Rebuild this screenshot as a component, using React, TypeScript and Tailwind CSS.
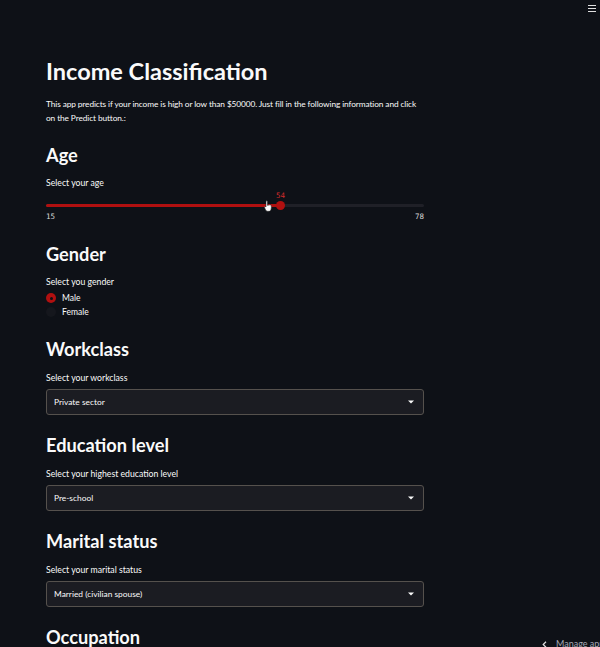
import React from 'react';

const font = { fontFamily: 'Lato, "Noto Sans", sans-serif' };
const mono = { fontFamily: '"DejaVu Sans Mono", monospace' };

const Heading = ({ children }: { children: React.ReactNode }) => (
  <h2 className="text-[18.2px] leading-[24px] font-bold text-[#fafafa]">{children}</h2>
);

const Label = ({ children }: { children: React.ReactNode }) => (
  <p className="text-[8.7px] leading-[12px] text-[#fafafa]">{children}</p>
);

const SelectBox = ({ value }: { value: string }) => (
  <div className="mt-[5px] h-[26px] w-full rounded-[3px] border border-[#55514d] bg-[#1b1c22] flex items-center justify-between pl-[7px] pr-[9px]">
    <span className="text-[8.4px] text-[#fafafa]">{value}</span>
    <svg width="6" height="4" viewBox="0 0 6 4">
      <path d="M0 0.5h6L3 3.5z" fill="#fafafa" />
    </svg>
  </div>
);

export default function App() {
  return (
    <div className="relative min-h-[647px] w-[600px] overflow-hidden bg-[#0e1117]" style={font}>
      {/* hamburger */}
      <div className="absolute left-[588px] top-[4.5px] flex flex-col gap-[2px]">
        <div className="h-[1px] w-[8px] bg-[#e0e0e0]" />
        <div className="h-[1px] w-[8px] bg-[#e0e0e0]" />
        <div className="h-[1px] w-[8px] bg-[#e0e0e0]" />
      </div>

      <main className="ml-[46px] w-[378px] pt-[55px]">
        <h1 className="text-[23.5px] leading-[32px] font-bold text-[#fafafa]">Income Classification</h1>
        <p className="mt-[10px] text-[8.3px] leading-[14px] tracking-[-0.1px] text-[#fafafa]">
          This app predicts if your income is high or low than $50000. Just fill in the following information and click on the Predict button.:
        </p>

        <section className="mt-[18px]">
          <Heading>Age</Heading>
          <div className="mt-[10px]">
            <Label>Select your age</Label>
          </div>
          <div className="relative h-[34px]">
            <div className="absolute left-0 right-0 top-[15px] h-[3px] rounded-full bg-[#1f2027]" />
            <div className="absolute left-0 top-[15px] h-[3px] w-[233px] rounded-full bg-[#b01010]" />
            <div className="absolute left-[230px] top-[12px] h-[9px] w-[9px] rounded-full bg-[#b01010]" />
            <span className="absolute left-[230px] top-[2px] text-[7.5px] leading-[10px] text-[#d12b2b]" style={mono}>
              54
            </span>
            <svg className="absolute left-[218px] top-[11px]" width="9" height="12" viewBox="0 0 9 12">
              <path
                d="M2.5 0.8c.6 0 1 .4 1 1v3.6c.2-.4.8-.5 1.2-.2.2-.4.9-.5 1.2-.1.3-.3 1-.2 1.2.3.4 1 .4 2.6-.1 4.2-.3 1-.9 1.7-2 1.7H3.6c-.9 0-1.5-.6-2-1.4L.6 7.7c-.3-.5 0-1.1.6-1.1.3 0 .6.2.8.4V1.8c0-.6.3-1 .5-1z"
                fill="#fff"
                stroke="#222"
                strokeWidth="0.6"
              />
            </svg>
            <div
              className="absolute left-0 right-0 top-[23px] flex justify-between text-[7.5px] leading-[10px] text-[#d8d8d8]"
              style={mono}
            >
              <span>15</span>
              <span>78</span>
            </div>
          </div>
        </section>

        <section className="mt-[19px]">
          <Heading>Gender</Heading>
          <div className="mt-[10px]">
            <Label>Select you gender</Label>
          </div>
          <div className="mt-[3px] flex flex-col">
            <div className="flex h-[14px] items-center gap-[6px]">
              <span className="flex h-[10px] w-[10px] items-center justify-center rounded-full bg-[#b01010]">
                <span className="h-[3px] w-[3px] rounded-full bg-[#0e1117]" />
              </span>
              <span className="text-[8.5px] text-[#fafafa]">Male</span>
            </div>
            <div className="flex h-[14px] items-center gap-[6px]">
              <span className="h-[10px] w-[10px] rounded-full bg-[#15171d]" />
              <span className="text-[8.5px] text-[#fafafa]">Female</span>
            </div>
          </div>
        </section>

        <section className="mt-[18px]">
          <Heading>Workclass</Heading>
          <div className="mt-[11px]">
            <Label>Select your workclass</Label>
          </div>
          <SelectBox value="Private sector" />
        </section>

        <section className="mt-[18px]">
          <Heading>Education level</Heading>
          <div className="mt-[11px]">
            <Label>Select your highest education level</Label>
          </div>
          <SelectBox value="Pre-school" />
        </section>

        <section className="mt-[18px]">
          <Heading>Marital status</Heading>
          <div className="mt-[11px]">
            <Label>Select your marital status</Label>
          </div>
          <SelectBox value="Married (civilian spouse)" />
        </section>

        <section className="mt-[18px]">
          <Heading>Occupation</Heading>
        </section>
      </main>

      {/* manage app */}
      <div className="absolute left-[542px] top-[638px] flex items-center gap-[9px] text-[9px] leading-[12px] text-[#a3a8b4]">
        <svg width="5" height="7" viewBox="0 0 5 7">
          <path d="M4 0.8L1.2 3.5 4 6.2" fill="none" stroke="#e0e0e0" strokeWidth="1.2" />
        </svg>
        <span className="whitespace-nowrap">Manage app</span>
      </div>
    </div>
  );
}
